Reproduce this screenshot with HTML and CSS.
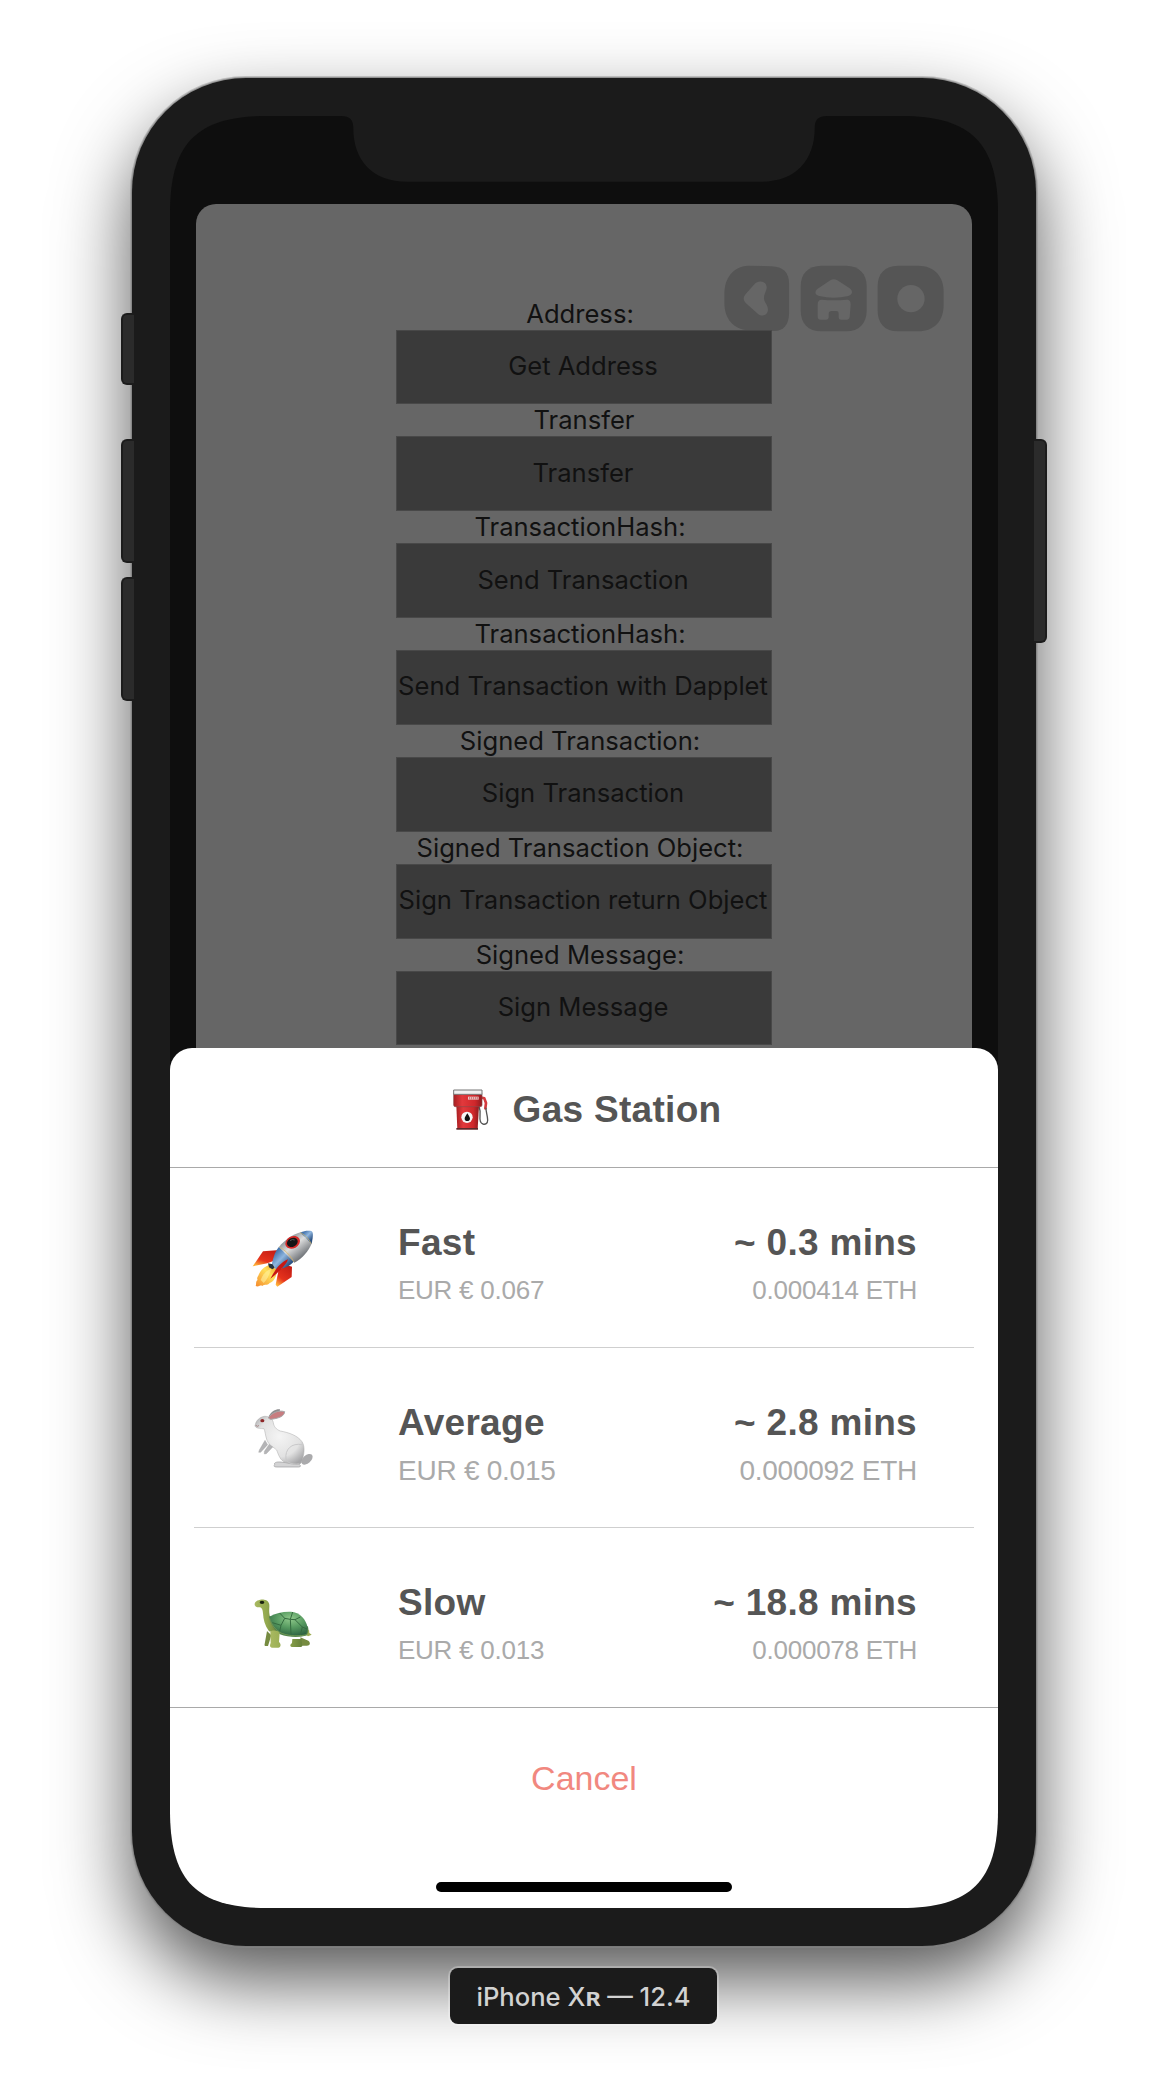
FILE: index.html
```html
<!DOCTYPE html>
<html lang="en">
<head>
<meta charset="utf-8">
<title>Gas Station</title>
<link rel="stylesheet" href="styles.css">
</head>
<body>
<div class="phone">
  <i class="side-key key-mute"></i>
  <i class="side-key key-up"></i>
  <i class="side-key key-down"></i>
  <i class="side-key key-power"></i>
  <div class="screen">
    <svg class="notch" viewBox="0 0 486 66" aria-hidden="true"><path fill="#1b1b1b" d="M0 0C9 0 12.300 4 12.300 12C12.300 45 32 65.700 66 65.700H420C454 65.700 473.700 45 473.700 12C473.700 4 477 0 486 0Z"/></svg>

    <main class="app">
      <svg class="toolbar" viewBox="70 45 665 202" aria-hidden="true">
        <g fill="#555">
          <path d="M145 47L215 49C250 50 268 68 268 100V190C268 225 250 243 225 243L145 241C100 238 74 205 74 160V130C74 85 100 49 145 47Z"/>
          <path d="M365 47H440C478 47 501 72 501 108V182C501 220 478 244 440 244H365C325 244 303 220 303 182V108C303 72 325 47 365 47Z"/>
          <path d="M595 47H655C705 47 732 80 732 125V165C732 212 705 244 655 244H595C555 244 534 220 534 182V108C534 72 555 47 595 47Z"/>
        </g>
        <g fill="#666">
          <path d="M164 103C172 93 188 92 196 100C204 110 201 118 196 129C191 140 192 150 197 158C204 168 207 178 203 187C198 198 184 200 175 192L138 159C130 150 130 141 138 132Z"/>
          <path d="M392 91Q402 84 413 91L450 115C460 122 460 134 446 138Q402 149 359 138C345 134 344 124 354 116Z"/>
          <path d="M366 149Q402 153 441 149C450 149 453 155 453 163L450 201C449 207 446 209 441 209H425C419 209 417 206 417 201V191C417 185 414 183 409 183H396C390 183 387 186 387 191V201C387 206 384 209 379 209H363C357 209 354 206 354 200V163C354 154 358 149 366 149Z"/>
          <circle cx="634" cy="146" r="41"/>
        </g>
      </svg>
      <div class="actions">
        <p class="label with-colon">Address:</p>
        <button class="action">Get Address</button>
        <p class="label">Transfer</p>
        <button class="action">Transfer</button>
        <p class="label with-colon">TransactionHash:</p>
        <button class="action">Send Transaction</button>
        <p class="label with-colon">TransactionHash:</p>
        <button class="action">Send Transaction with Dapplet</button>
        <p class="label with-colon">Signed Transaction:</p>
        <button class="action">Sign Transaction</button>
        <p class="label with-colon">Signed Transaction Object:</p>
        <button class="action">Sign Transaction return Object</button>
        <p class="label with-colon">Signed Message:</p>
        <button class="action">Sign Message</button>
      </div>
    </main>

    <section class="sheet">
      <header class="sheet-head">
        <svg class="pump" viewBox="60 50 120 135" aria-hidden="true">
          <defs>
            <linearGradient id="pumpRed" x1="0" x2="1"><stop offset="0" stop-color="#a81f22"/><stop offset=".3" stop-color="#e2393c"/><stop offset=".75" stop-color="#cf272b"/><stop offset="1" stop-color="#8d1a1e"/></linearGradient>
          </defs>
          <path d="M153 82L160 84L165 98L163 114" fill="none" stroke="#d63a3e" stroke-width="8" stroke-linecap="round" stroke-linejoin="round"/>
          <path d="M165 112C164 125 170 135 170 150C170 160 163 163 156 161C147 158 146 148 147 138C148 126 147 116 144 108" fill="none" stroke="#555" stroke-width="4"/>
          <path d="M76 106H144L140 177H79Z" fill="url(#pumpRed)"/>
          <path d="M68 70H153V104Q153 109 148 109H73Q68 109 68 104Z" fill="url(#pumpRed)" stroke="#8a4a4a" stroke-width="2"/>
          <path d="M68 59H153V72H68Z" fill="#f1f1f1" stroke="#777" stroke-width="3"/>
          <path d="M111 79H143V88H111Z" fill="#eec7c7"/>
          <path d="M116 80V87M122 80V87M128 80V87M134 80V87M139 80V87" stroke="#b84a4a" stroke-width="2"/>
          <path d="M76 173H141V178H76Z" fill="#5b2a2c"/>
          <circle cx="108" cy="141" r="17" fill="#f5f5f5"/>
          <path d="M109 129C115 138 117 142 117 145C117 150 113 152 109 152C104 152 101 149 101 145C101 141 104 137 109 129Z" fill="#111"/>
        </svg>
        <h1 class="strong">Gas Station</h1>
      </header>

      <ul class="options">
        <li class="option">
          <svg class="emoji" viewBox="0 30 300 300" aria-hidden="true">
            <defs>
              <linearGradient id="hull" x1=".25" y1=".2" x2=".75" y2=".8"><stop offset="0" stop-color="#8d9398"/><stop offset=".4" stop-color="#dcdddd"/><stop offset="1" stop-color="#6c7075"/></linearGradient>
              <linearGradient id="blue" x1=".2" y1=".2" x2=".8" y2=".8"><stop offset="0" stop-color="#4575ad"/><stop offset=".45" stop-color="#8fb6df"/><stop offset="1" stop-color="#2a4f80"/></linearGradient>
              <linearGradient id="finA" x1=".8" y1="0" x2=".2" y2="1"><stop offset="0" stop-color="#c31c14"/><stop offset=".65" stop-color="#e6321c"/><stop offset="1" stop-color="#ffb53a"/></linearGradient>
              <linearGradient id="flame" x1="1" y1="0" x2="0" y2="1"><stop offset="0" stop-color="#f09c28"/><stop offset=".4" stop-color="#ffe05a"/><stop offset="1" stop-color="#f58a2c"/></linearGradient>
            </defs>
            <path d="M118 194C103 200 93 209 87 222C84 231 79 233 83 240C76 244 80 252 77 258C86 262 90 254 97 258C105 251 111 258 119 249C133 245 139 229 142 210Z" fill="url(#flame)"/>
            <path d="M92 240C98 225 107 212 123 206C120 223 111 239 101 249Z" fill="#fff1a0" opacity=".6"/>
            <path d="M150 150L99 154L68 199L112 190L130 183Z" fill="url(#finA)"/>
            <path d="M186 200L185 231L142 260L137 254L146 209L172 196Z" fill="url(#finA)"/>
            <path d="M147 140L192 184C181 199 159 207 137 208L126 190C130 169 137 151 147 140Z" fill="url(#blue)"/>
            <path d="M147 141C164 119 189 103 214 96L246 129C235 154 218 175 193 188Z" fill="url(#hull)"/>
            <path d="M211 98C222 92 235 91 244 93C250 95 250 107 245 131Z" fill="url(#blue)"/>
            <path d="M211 98Q232 108 244 131M148 141Q175 155 192 186" fill="none" stroke="#d9b45c" stroke-width="2"/>
            <ellipse cx="188" cy="127" rx="23" ry="18" transform="rotate(-28 188 127)" fill="#d62a28"/>
            <ellipse cx="187" cy="127" rx="17" ry="13" transform="rotate(-28 187 127)" fill="#151515"/>
            <path d="M180 122Q187 116 194 120" fill="none" stroke="#555" stroke-width="3"/>
            <path d="M174 178C172 190 145 219 121 236C137 207 149 189 174 178Z" fill="#c81713"/>
            <path d="M114 190L128 193L134 203L127 208L117 202Z" fill="#26323d"/>
          </svg>
          <div class="speed"><p class="strong">Fast</p><p class="sub">EUR € 0.067</p></div>
          <div class="eta"><p class="strong">~ 0.3 mins</p><p class="sub">0.000414 ETH</p></div>
        </li>
        <li class="option wide-sub">
          <svg class="emoji" viewBox="0 0 300 300" aria-hidden="true">
            <defs>
              <radialGradient id="fur" cx=".5" cy=".42" r=".65"><stop offset="0" stop-color="#f4f4f4"/><stop offset=".65" stop-color="#e2e2e2"/><stop offset="1" stop-color="#a5a5a7"/></radialGradient>
            </defs>
            <ellipse cx="231" cy="208" rx="20" ry="12" transform="rotate(-42 231 208)" fill="#aaaaac"/>
            <path d="M116 79C124 65 136 57 150 58C151 66 138 80 120 86Z" fill="#8c8c8e"/>
            <path d="M105 151L88 180L86 187L92 187L113 164ZM121 158L103 184L103 192L109 191L132 167Z" fill="#b4b4b6" stroke="#9a9a9c" stroke-width="1"/>
            <path d="M134 224C130 217 144 214 158 217L205 222C214 226 213 231 206 231H141C133 231 130 229 134 224Z" fill="#d3d3d4" stroke="#98989a" stroke-width="2"/>
            <path d="M76 104C78 92 89 81 103 79C118 78 128 87 130 98C131 109 139 119 151 123C178 128 203 137 216 155C226 170 223 194 214 218C208 227 184 223 166 217C151 212 146 196 140 180C131 171 116 166 111 151C106 137 105 122 102 116C94 116 84 116 78 112C75 109 74 107 76 104Z" fill="url(#fur)" stroke="#aaa" stroke-width="1.500"/>
            <path d="M216 164C185 158 164 178 168 207C172 218 184 224 207 222" fill="none" stroke="#c9c9ca" stroke-width="3"/>
            <path d="M115 84C123 70 145 59 164 65C164 78 145 86 121 88Z" fill="#c77d80" stroke="#a8a8aa" stroke-width="3"/>
            <ellipse cx="97" cy="92" rx="6" ry="5" fill="#8e2627"/>
            <path d="M77 106L83 109L87 106" fill="none" stroke="#966" stroke-width="2"/>
          </svg>
          <div class="speed"><p class="strong">Average</p><p class="sub">EUR € 0.015</p></div>
          <div class="eta"><p class="strong">~ 2.8 mins</p><p class="sub">0.000092 ETH</p></div>
        </li>
        <li class="option">
          <svg class="emoji" viewBox="0 0 300 300" aria-hidden="true">
            <defs>
              <radialGradient id="shell" cx=".55" cy=".3" r=".75"><stop offset="0" stop-color="#8fc98b"/><stop offset=".5" stop-color="#569a60"/><stop offset="1" stop-color="#2c6040"/></radialGradient>
              <linearGradient id="skin" x1="0" x2="1"><stop offset="0" stop-color="#a9b961"/><stop offset=".5" stop-color="#93a94e"/><stop offset="1" stop-color="#66803a"/></linearGradient>
            </defs>
            <path d="M226 193L237 178L238 189L245 194L234 199Z" fill="#9cac52"/>
            <path d="M111 183L104 222C102 228 106 229 114 228L124 196ZM211 202L235 212C243 219 240 226 231 227H213Z" fill="#768b41"/>
            <path d="M74 101C75 93 90 88 102 89C115 91 119 99 118 111C117 126 117 139 128 157L146 190L117 184C104 166 100 148 99 130C98 117 95 112 87 112C79 112 73 108 74 101Z" fill="url(#skin)"/>
            <path d="M118 139C120 157 130 178 150 193C174 202 209 204 230 196C236 186 236 173 233 169Z" fill="#4f824b"/>
            <path d="M118 140C137 129 160 124 183 125C209 127 228 147 233 173L229 193C202 198 177 197 155 188C136 178 123 160 118 140Z" fill="url(#shell)"/>
            <path d="M149 129L164 145L181 148L188 126M181 148L195 149L211 141M164 145L153 166L127 158M153 166L149 184M181 148L183 192M195 149L217 171L231 177M217 171L211 195" fill="none" stroke="#356b3f" stroke-width="3"/>
            <path d="M119 145C124 164 136 180 155 190C180 199 210 200 231 194" fill="none" stroke="#6c9455" stroke-width="3"/>
            <path d="M121 185C127 179 144 181 149 188L147 216C154 222 153 232 145 233H126C119 232 119 226 122 219ZM187 207H214L216 221C219 229 215 231 209 231H188C179 231 179 224 186 219Z" fill="url(#skin)"/>
            <ellipse cx="96" cy="97" rx="7" ry="5" fill="#18200f"/>
          </svg>
          <div class="speed"><p class="strong">Slow</p><p class="sub">EUR € 0.013</p></div>
          <div class="eta"><p class="strong">~ 18.8 mins</p><p class="sub">0.000078 ETH</p></div>
        </li>
      </ul>

      <footer class="sheet-foot">
        <button class="cancel">Cancel</button>
        <i class="home-bar"></i>
      </footer>
    </section>
  </div>
</div>
<p class="caption">iPhone X<b>ʀ</b> — 12.4</p>
</body>
</html>
```

FILE: styles.css
```css
* { box-sizing: border-box; }

body {
  margin: 0;
  min-height: 2096px;
  padding-top: 78px;
  display: flex;
  flex-direction: column;
  align-items: center;
  background: #fff;
  overflow: hidden;
}

p, h1, ul { margin: 0; padding: 0; }

button { border: 0; padding: 0; background: none; }

.phone {
  position: relative;
  flex: none;
  width: 904px;
  height: 1868px;
  padding: 38px;
  border-radius: 114px;
  background: #1b1b1b;
  box-shadow: 0 0 0 1px rgba(120, 120, 120, .6), 0 0 0 2px rgba(140, 140, 140, .45), 0 34px 76px rgba(0, 0, 0, .67);
}

.side-key {
  position: absolute;
  width: 13px;
  border: 2px solid #1c1c1c;
  background: #2b2b2b;
}

.key-mute, .key-up, .key-down { left: -11px; border-right: 0; border-radius: 6px 0 0 6px; }
.key-mute { top: 235px; height: 72px; }
.key-up { top: 361px; height: 124px; }
.key-down { top: 499px; height: 124px; }
.key-power { top: 361px; right: -11px; height: 204px; border-left: 0; border-radius: 0 6px 6px 0; }

.screen {
  position: relative;
  width: 828px;
  height: 1792px;
  padding: 88px 26px 0;
  background: #0e0e0e;
  overflow: hidden;
  clip-path: path("M0 97C0 27 27 0 97 0H731C801 0 828 27 828 97V1695C828 1765 801 1792 731 1792H97C27 1792 0 1765 0 1695Z");
}

.notch { position: absolute; top: 0; left: 171px; width: 486px; height: 66px; }

.app {
  position: relative;
  height: 900px;
  padding-top: 93.5px;
  border-radius: 20px 20px 0 0;
  background: #666;
}

.toolbar { position: absolute; top: 61px; left: 527.3px; width: 221.7px; height: 67.3px; }

.actions {
  position: relative;
  width: 376px;
  margin: 0 auto;
  display: flex;
  flex-direction: column;
  font: 25.6px/32px Inter, sans-serif;
  color: #111;
  text-align: center;
  white-space: nowrap;
}

.label { height: 32px; }
.with-colon { padding-right: 8px; }

.action {
  height: 74.85px;
  padding: 0 2px 2px 0;
  border: 1px solid #484848;
  background: #3a3a3a;
  font: inherit;
  color: inherit;
  white-space: nowrap;
}

.sheet {
  position: absolute;
  inset: auto 0 0;
  height: 860px;
  border-radius: 22px 22px 0 0;
  background: #fff;
  font-family: "Liberation Sans", sans-serif;
}

.sheet-head {
  height: 120px;
  padding: 38.7px 0 0 4px;
  display: flex;
  justify-content: center;
  align-items: flex-start;
  gap: 22px;
  border-bottom: 1px solid #a9a9a9;
}

.pump { width: 40px; height: 45px; }

.strong { font-size: 37px; line-height: 42px; font-weight: 700; letter-spacing: .3px; color: #555; }
.sheet-head .strong { padding-top: 2px; }

.options { list-style: none; border-bottom: 1px solid #a9a9a9; }

.option {
  height: 180px;
  margin: 0 24px;
  padding: 42px 57px 0 36px;
  display: grid;
  grid-template-columns: 100px 1fr auto;
  border-bottom: 1px solid #cfcfcf;
}

.option:last-child { height: 179px; border-bottom: 0; }

.emoji { width: 100px; height: 100px; }

.speed, .eta { padding-top: 12px; display: flex; flex-direction: column; gap: 11px; }
.speed { padding-left: 68px; }
.eta { align-items: flex-end; }

.sub { font-size: 26px; line-height: 30px; letter-spacing: -.25px; color: #aaa; }
.wide-sub .sub { font-size: 28px; padding-top: 1px; }

.sheet-foot { padding-top: 50px; display: flex; flex-direction: column; align-items: center; gap: 84px; }

.cancel { font: 34px/40px "Liberation Sans", sans-serif; color: #f1887f; }

.home-bar { width: 296px; height: 10px; border-radius: 5px; background: #000; }

.caption {
  position: relative;
  margin: 22px 1px 0 0;
  width: 267px;
  height: 56px;
  border-radius: 8px;
  background: #1b1b1b;
  box-shadow: 0 0 0 2px rgba(255, 255, 255, .25);
  font: 500 25.6px/58px Inter, sans-serif;
  color: #d2d2d2;
  text-align: center;
}
```
